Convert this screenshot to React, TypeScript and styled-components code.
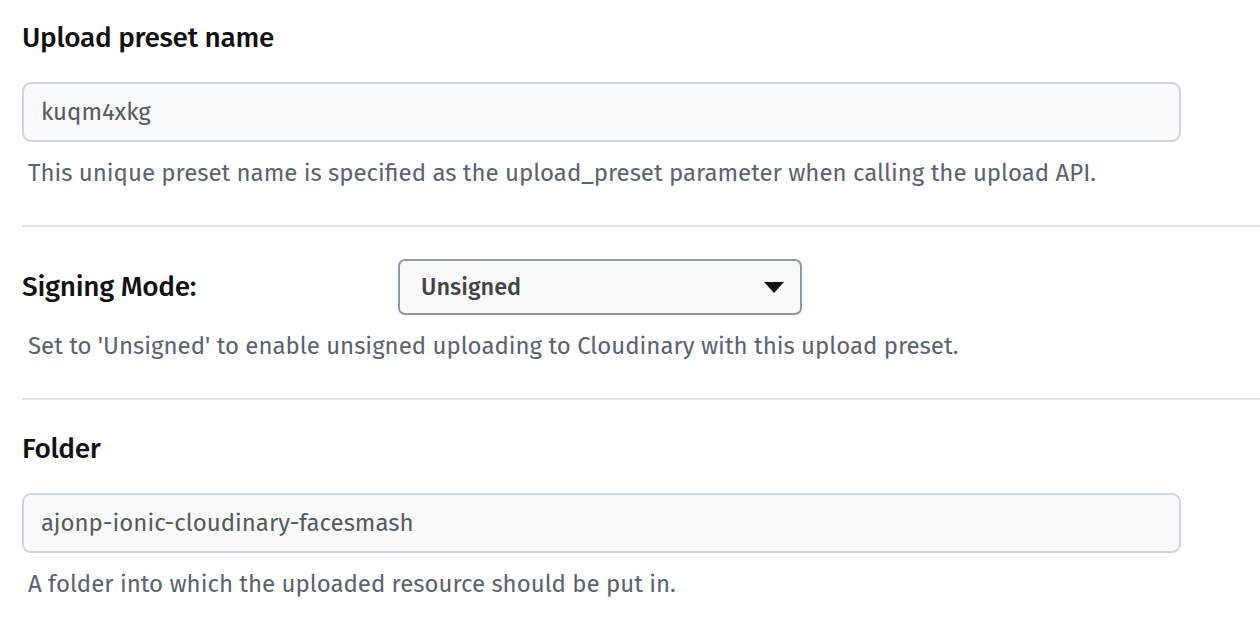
import React, { useState } from 'react';
import styled, { createGlobalStyle } from 'styled-components';

const GlobalStyle = createGlobalStyle`
  body {
    margin: 0;
    background: #ffffff;
    font-family: "Fira Sans", "Open Sans", "Noto Sans", sans-serif;
  }
`;

const Page = styled.div`
  display: flex;
  flex-direction: column;
  padding: 19px 0 0 22px;
`;

const Section = styled.div`
  display: flex;
  flex-direction: column;
  padding-right: 79px;
`;

const Label = styled.label`
  font-size: 28px;
  line-height: 38px;
  font-weight: 500;
  color: #111111;
  letter-spacing: -0.3px;
`;

const TextInput = styled.input`
  box-sizing: border-box;
  width: 100%;
  height: 60px;
  margin-top: 25px;
  padding: 0 17px;
  border: 2px solid #cdd5de;
  border-radius: 9px;
  background: #fafafa;
  font-family: inherit;
  font-size: 24px;
  color: #555a60;
  &:focus {
    outline: none;
  }
`;

const Help = styled.div`
  margin: 16px 0 0 6px;
  font-size: 24px;
  line-height: 30px;
  color: #5b6270;
`;

const Divider = styled.hr`
  margin: 37px 0 0 0;
  border: none;
  height: 2px;
  background: #e2e2e2;
`;

const Row = styled.div`
  display: flex;
  align-items: center;
  margin-top: 32px;
`;

const RowLabel = styled(Label)`
  width: 376px;
`;

const SelectBox = styled.div`
  box-sizing: border-box;
  width: 404px;
  height: 56px;
  display: flex;
  align-items: center;
  justify-content: space-between;
  padding: 0 16px 0 21px;
  border: 2px solid #8e99a6;
  border-radius: 7px;
  background: #f9f9f9;
  font-size: 23.5px;
  font-weight: 500;
  color: #434343;
  cursor: pointer;
`;

const Caret = styled.svg`
  width: 20px;
  height: 11px;
`;

const FolderLabel = styled(Label)`
  margin-top: 30px;
`;

export default function App() {
  const [preset, setPreset] = useState('kuqm4xkg');
  const [folder, setFolder] = useState('ajonp-ionic-cloudinary-facesmash');

  return (
    <>
      <GlobalStyle />
      <Page>
        <Section>
          <Label>Upload preset name</Label>
          <TextInput value={preset} onChange={(e) => setPreset(e.target.value)} />
          <Help>This unique preset name is specified as the upload_preset parameter when calling the upload API.</Help>
        </Section>
        <Divider />
        <Section>
          <Row>
            <RowLabel>Signing Mode:</RowLabel>
            <SelectBox>
              Unsigned
              <Caret viewBox="0 0 20 11">
                <path d="M0 0 L20 0 L10 11 Z" fill="#111" />
              </Caret>
            </SelectBox>
          </Row>
          <Help>Set to 'Unsigned' to enable unsigned uploading to Cloudinary with this upload preset.</Help>
        </Section>
        <Divider />
        <Section>
          <FolderLabel>Folder</FolderLabel>
          <TextInput value={folder} onChange={(e) => setFolder(e.target.value)} />
          <Help>A folder into which the uploaded resource should be put in.</Help>
        </Section>
      </Page>
    </>
  );
}
